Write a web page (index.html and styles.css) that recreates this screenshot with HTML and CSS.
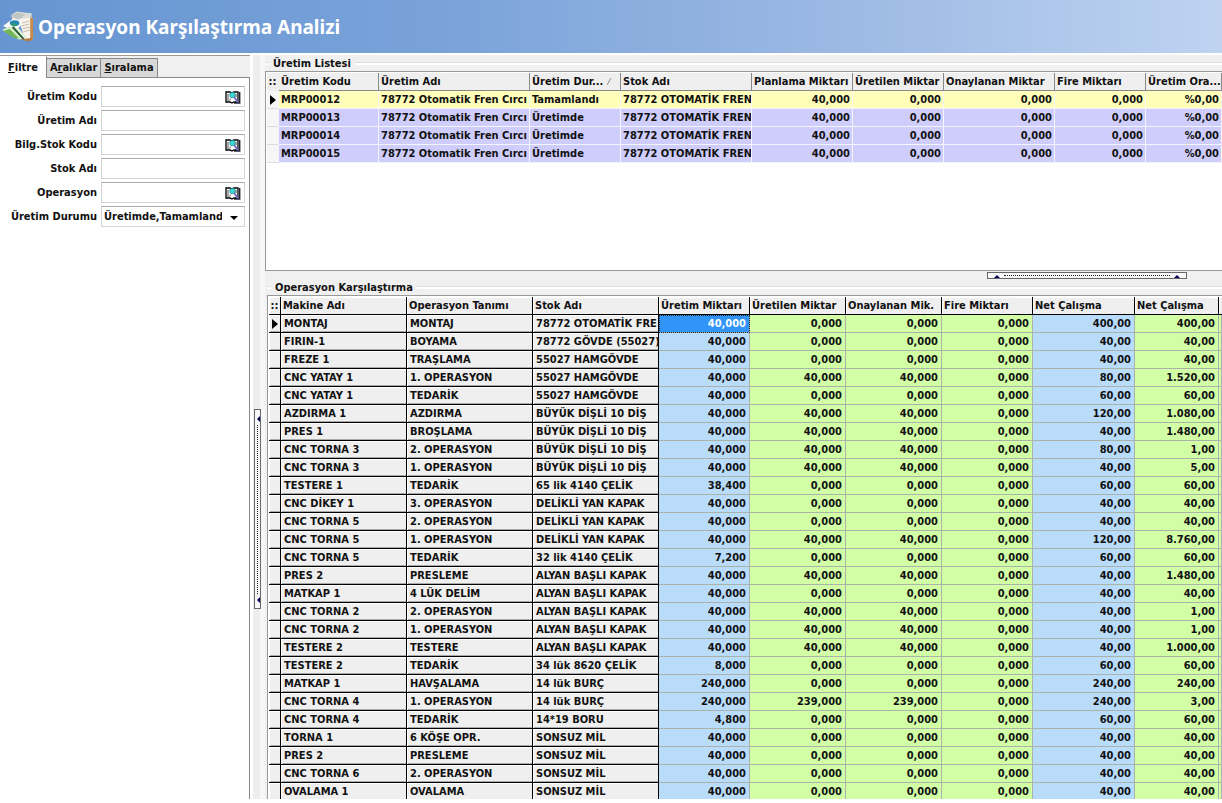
FILE: index.html
```html
<!DOCTYPE html>
<html lang="tr">
<head>
<meta charset="utf-8">
<title>Operasyon Karşılaştırma Analizi</title>
<link rel="stylesheet" href="styles.css">
</head>
<body>
<svg class="defs" aria-hidden="true">
  <symbol id="book" viewBox="0 0 16 14">
    <path d="M1 2h4l2 1 2-1h4v10H9l-2 1-2-1H1z" fill="#fff" stroke="#000" stroke-width="1.300"/>
    <path d="M3 4v7M11 4v3" stroke="#555" stroke-width="1"/>
    <path d="M14.700 2v11H9" fill="none" stroke="#223" stroke-width="1.400"/>
    <path d="M9 7l4 5" stroke="#7566c0" stroke-width="2"/>
    <circle cx="7.500" cy="5" r="2.800" fill="#3fd6d6" stroke="#177" stroke-width=".6"/>
    <path d="M6 8l-2 3" stroke="#888" stroke-width="1"/>
  </symbol>
</svg>
<header class="title-bar">
  <svg class="logo" viewBox="0 0 34 32" aria-hidden="true">
    <path d="M10 3l5-3 16 2-2 7-18 4z" fill="#dcdcd8"/>
    <path d="M8 5l7-4 9 2-6 5z" fill="#bfc6c4"/>
    <path d="M17 8l14-2 1 22-8 2z" fill="#f6f3ec"/>
    <path d="M29 6l3 1v21l-3 3z" fill="#c98b4c"/>
    <path d="M20 12l8-2M20 15l8-2M21 18l8-2M22 21l7-2" stroke="#c7b9a6" stroke-width="1"/>
    <path d="M1 15L12 7l9 4-6 10z" fill="#fbfbf7"/>
    <ellipse cx="13" cy="12" rx="5" ry="3" fill="#2586b3"/>
    <path d="M9 13c2-2 5-1 7 1-2 2-5 2-7-1z" fill="#2c9a72"/>
    <path d="M0 19l8-4 10 3 8 10-9 1z" fill="#d9ecc9"/>
    <path d="M1 20l7-2 10 10-6-1z" fill="#72b653"/>
    <path d="M11 16l12 13" stroke="#295d35" stroke-width="2"/>
    <path d="M14 16l10 12" stroke="#eef6ea" stroke-width="1.200"/>
    <path d="M19 29l13-2-5 4z" fill="#b87843"/>
  </svg>
  <h1>Operasyon Karşılaştırma Analizi</h1>
</header>
<main class="workspace">
  <aside class="sidebar">
    <div class="tabs" role="tablist">
      <button class="tab active" role="tab" aria-selected="true"><u>F</u>iltre</button>
      <button class="tab" role="tab"><span>A<u>r</u>alıklar</span></button>
      <button class="tab" role="tab"><u>S</u>ıralama</button>
    </div>
    <form class="filter">
      <label for="kod">Üretim Kodu</label>
      <div class="field"><input id="kod" type="text"><button type="button" aria-label="Üretim Kodu ara"><svg><use href="#book"/></svg></button></div>
      <label for="ad">Üretim Adı</label>
      <div class="field"><input id="ad" type="text"></div>
      <label for="bstok">Bilg.Stok Kodu</label>
      <div class="field"><input id="bstok" type="text"><button type="button" aria-label="Stok Kodu ara"><svg><use href="#book"/></svg></button></div>
      <label for="stok">Stok Adı</label>
      <div class="field"><input id="stok" type="text"></div>
      <label for="opr">Operasyon</label>
      <div class="field"><input id="opr" type="text"><button type="button" aria-label="Operasyon ara"><svg><use href="#book"/></svg></button></div>
      <label for="durum">Üretim Durumu</label>
      <div class="field"><select id="durum"><option>Üretimde,Tamamlandı</option></select><svg class="drop" viewBox="0 0 8 4" aria-hidden="true"><path d="M0 0h8L4 4z"/></svg></div>
    </form>
  </aside>
  <div class="splitter-v">
    <button class="grip-v" aria-label="Filtre panelini gizle"><svg viewBox="0 0 3 6"><path d="M3 0v6L0 3z"/></svg><i></i><svg viewBox="0 0 3 6"><path d="M3 0v6L0 3z"/></svg></button>
  </div>
  <div class="content">
    <section class="group list">
      <h2>Üretim Listesi</h2>
      <div class="frame">
        <table class="grid plain">
          <colgroup><col class="w12"><col class="w100"><col class="w151"><col class="w91"><col class="w131"><col class="w101"><col class="w91"><col class="w111"><col class="w91"><col></colgroup>
          <thead><tr><th class="mark">::</th><th>Üretim Kodu</th><th>Üretim Adı</th><th>Üretim Dur... <svg class="sort" viewBox="0 0 5 7" aria-hidden="true"><path d="M0 7L4 0"/></svg></th><th>Stok Adı</th><th>Planlama Miktarı</th><th>Üretilen Miktar</th><th>Onaylanan Miktar</th><th>Fire Miktarı</th><th>Üretim Ora...</th></tr></thead>
          <tbody>
            <tr class="current"><td class="mark"><svg viewBox="0 0 6 10"><path d="M0 0l6 5-6 5z"/></svg></td><td>MRP00012</td><td>78772 Otomatik Fren Cırcı</td><td>Tamamlandı</td><td>78772 OTOMATİK FREN</td><td>40,000</td><td>0,000</td><td>0,000</td><td>0,000</td><td>%0,00</td></tr>
            <tr><td class="mark"></td><td>MRP00013</td><td>78772 Otomatik Fren Cırcı</td><td>Üretimde</td><td>78772 OTOMATİK FREN</td><td>40,000</td><td>0,000</td><td>0,000</td><td>0,000</td><td>%0,00</td></tr>
            <tr><td class="mark"></td><td>MRP00014</td><td>78772 Otomatik Fren Cırcı</td><td>Üretimde</td><td>78772 OTOMATİK FREN</td><td>40,000</td><td>0,000</td><td>0,000</td><td>0,000</td><td>%0,00</td></tr>
            <tr><td class="mark"></td><td>MRP00015</td><td>78772 Otomatik Fren Cırcı</td><td>Üretimde</td><td>78772 OTOMATİK FREN</td><td>40,000</td><td>0,000</td><td>0,000</td><td>0,000</td><td>%0,00</td></tr>
          </tbody>
        </table>
      </div>
    </section>
    <div class="splitter-h">
      <button class="grip-h" aria-label="Üretim listesini gizle"><svg viewBox="0 0 6 3"><path d="M0 3h6L3 0z"/></svg><i></i><svg viewBox="0 0 6 3"><path d="M0 3h6L3 0z"/></svg></button>
    </div>
    <section class="group compare">
      <h2>Operasyon Karşılaştırma</h2>
      <div class="frame">
        <table class="grid fixed">
          <colgroup><col class="w12"><col class="w126"><col class="w126"><col class="w126"><col class="w91"><col class="w96"><col class="w96"><col class="w91"><col class="w102"><col class="w84"><col></colgroup>
          <thead><tr><th class="mark">::</th><th>Makine Adı</th><th>Operasyon Tanımı</th><th>Stok Adı</th><th>Üretim Miktarı</th><th>Üretilen Miktar</th><th>Onaylanan Mik.</th><th>Fire Miktarı</th><th>Net Çalışma</th><th>Net Çalışma</th><th></th></tr></thead>
          <tbody>
            <tr><td class="mark"><svg viewBox="0 0 6 10"><path d="M0 0l6 5-6 5z"/></svg></td><td>MONTAJ</td><td>MONTAJ</td><td>78772 OTOMATİK FRE</td><td class="selected">40,000</td><td>0,000</td><td>0,000</td><td>0,000</td><td>400,00</td><td>400,00</td><td></td></tr>
            <tr><td></td><td>FIRIN-1</td><td>BOYAMA</td><td>78772 GÖVDE (55027)</td><td>40,000</td><td>0,000</td><td>0,000</td><td>0,000</td><td>40,00</td><td>40,00</td><td></td></tr>
            <tr><td></td><td>FREZE 1</td><td>TRAŞLAMA</td><td>55027 HAMGÖVDE</td><td>40,000</td><td>0,000</td><td>0,000</td><td>0,000</td><td>40,00</td><td>40,00</td><td></td></tr>
            <tr><td></td><td>CNC YATAY 1</td><td>1. OPERASYON</td><td>55027 HAMGÖVDE</td><td>40,000</td><td>40,000</td><td>40,000</td><td>0,000</td><td>80,00</td><td>1.520,00</td><td></td></tr>
            <tr><td></td><td>CNC YATAY 1</td><td>TEDARİK</td><td>55027 HAMGÖVDE</td><td>40,000</td><td>0,000</td><td>0,000</td><td>0,000</td><td>60,00</td><td>60,00</td><td></td></tr>
            <tr><td></td><td>AZDIRMA 1</td><td>AZDIRMA</td><td>BÜYÜK DİŞLİ 10 DİŞ</td><td>40,000</td><td>40,000</td><td>40,000</td><td>0,000</td><td>120,00</td><td>1.080,00</td><td></td></tr>
            <tr><td></td><td>PRES 1</td><td>BROŞLAMA</td><td>BÜYÜK DİŞLİ 10 DİŞ</td><td>40,000</td><td>40,000</td><td>40,000</td><td>0,000</td><td>40,00</td><td>1.480,00</td><td></td></tr>
            <tr><td></td><td>CNC TORNA 3</td><td>2. OPERASYON</td><td>BÜYÜK DİŞLİ 10 DİŞ</td><td>40,000</td><td>40,000</td><td>40,000</td><td>0,000</td><td>80,00</td><td>1,00</td><td></td></tr>
            <tr><td></td><td>CNC TORNA 3</td><td>1. OPERASYON</td><td>BÜYÜK DİŞLİ 10 DİŞ</td><td>40,000</td><td>40,000</td><td>40,000</td><td>0,000</td><td>40,00</td><td>5,00</td><td></td></tr>
            <tr><td></td><td>TESTERE 1</td><td>TEDARİK</td><td>65 lik 4140 ÇELİK</td><td>38,400</td><td>0,000</td><td>0,000</td><td>0,000</td><td>60,00</td><td>60,00</td><td></td></tr>
            <tr><td></td><td>CNC DİKEY 1</td><td>3. OPERASYON</td><td>DELİKLİ YAN KAPAK</td><td>40,000</td><td>0,000</td><td>0,000</td><td>0,000</td><td>40,00</td><td>40,00</td><td></td></tr>
            <tr><td></td><td>CNC TORNA 5</td><td>2. OPERASYON</td><td>DELİKLİ YAN KAPAK</td><td>40,000</td><td>0,000</td><td>0,000</td><td>0,000</td><td>40,00</td><td>40,00</td><td></td></tr>
            <tr><td></td><td>CNC TORNA 5</td><td>1. OPERASYON</td><td>DELİKLİ YAN KAPAK</td><td>40,000</td><td>40,000</td><td>40,000</td><td>0,000</td><td>120,00</td><td>8.760,00</td><td></td></tr>
            <tr><td></td><td>CNC TORNA 5</td><td>TEDARİK</td><td>32 lik 4140 ÇELİK</td><td>7,200</td><td>0,000</td><td>0,000</td><td>0,000</td><td>60,00</td><td>60,00</td><td></td></tr>
            <tr><td></td><td>PRES 2</td><td>PRESLEME</td><td>ALYAN BAŞLI KAPAK</td><td>40,000</td><td>40,000</td><td>40,000</td><td>0,000</td><td>40,00</td><td>1.480,00</td><td></td></tr>
            <tr><td></td><td>MATKAP 1</td><td>4 LÜK DELİM</td><td>ALYAN BAŞLI KAPAK</td><td>40,000</td><td>0,000</td><td>0,000</td><td>0,000</td><td>40,00</td><td>40,00</td><td></td></tr>
            <tr><td></td><td>CNC TORNA 2</td><td>2. OPERASYON</td><td>ALYAN BAŞLI KAPAK</td><td>40,000</td><td>40,000</td><td>40,000</td><td>0,000</td><td>40,00</td><td>1,00</td><td></td></tr>
            <tr><td></td><td>CNC TORNA 2</td><td>1. OPERASYON</td><td>ALYAN BAŞLI KAPAK</td><td>40,000</td><td>40,000</td><td>40,000</td><td>0,000</td><td>40,00</td><td>1,00</td><td></td></tr>
            <tr><td></td><td>TESTERE 2</td><td>TESTERE</td><td>ALYAN BAŞLI KAPAK</td><td>40,000</td><td>40,000</td><td>40,000</td><td>0,000</td><td>40,00</td><td>1.000,00</td><td></td></tr>
            <tr><td></td><td>TESTERE 2</td><td>TEDARİK</td><td>34 lük 8620 ÇELİK</td><td>8,000</td><td>0,000</td><td>0,000</td><td>0,000</td><td>60,00</td><td>60,00</td><td></td></tr>
            <tr><td></td><td>MATKAP 1</td><td>HAVŞALAMA</td><td>14 lük BURÇ</td><td>240,000</td><td>0,000</td><td>0,000</td><td>0,000</td><td>240,00</td><td>240,00</td><td></td></tr>
            <tr><td></td><td>CNC TORNA 4</td><td>1. OPERASYON</td><td>14 lük BURÇ</td><td>240,000</td><td>239,000</td><td>239,000</td><td>0,000</td><td>240,00</td><td>3,00</td><td></td></tr>
            <tr><td></td><td>CNC TORNA 4</td><td>TEDARİK</td><td>14*19 BORU</td><td>4,800</td><td>0,000</td><td>0,000</td><td>0,000</td><td>60,00</td><td>60,00</td><td></td></tr>
            <tr><td></td><td>TORNA 1</td><td>6 KÖŞE OPR.</td><td>SONSUZ MİL</td><td>40,000</td><td>0,000</td><td>0,000</td><td>0,000</td><td>40,00</td><td>40,00</td><td></td></tr>
            <tr><td></td><td>PRES 2</td><td>PRESLEME</td><td>SONSUZ MİL</td><td>40,000</td><td>0,000</td><td>0,000</td><td>0,000</td><td>40,00</td><td>40,00</td><td></td></tr>
            <tr><td></td><td>CNC TORNA 6</td><td>2. OPERASYON</td><td>SONSUZ MİL</td><td>40,000</td><td>0,000</td><td>0,000</td><td>0,000</td><td>40,00</td><td>40,00</td><td></td></tr>
            <tr><td></td><td>OVALAMA 1</td><td>OVALAMA</td><td>SONSUZ MİL</td><td>40,000</td><td>0,000</td><td>0,000</td><td>0,000</td><td>40,00</td><td>40,00</td><td></td></tr>
          </tbody>
        </table>
      </div>
    </section>
  </div>
</main>
</body>
</html>
```
FILE: styles.css
```css
* { box-sizing: border-box; }
body {
  margin: 0;
  height: 100vh;
  display: flex;
  flex-direction: column;
  padding-bottom: 4px;
  background: #fff;
  color: #111;
  font: bold 11px/17px "DejaVu Sans Condensed", Tahoma, "DejaVu Sans", sans-serif;
  overflow: hidden;
}
.defs { position: absolute; width: 0; height: 0; }
button, input, select { font: inherit; color: inherit; margin: 0; border-radius: 0; }

.title-bar {
  flex: none;
  display: flex;
  align-items: center;
  gap: 3px;
  height: 53px;
  padding-left: 2px;
  background: linear-gradient(90deg, #6695d1, #79a2d9 35%, #9dbae4 70%, #bfd3f1);
}
.logo { width: 33px; height: 32px; }
h1 { margin: 0; color: #fff; font: bold 19px/24px "Noto Sans", Tahoma, sans-serif; }

.workspace { flex: 1; min-height: 0; display: flex; padding-top: 2px; }

.sidebar { flex: none; width: 250px; display: flex; flex-direction: column; border-top: 1px solid #999; background: #f0f0f0; }
.tabs { display: flex; align-items: flex-end; height: 21px; position: relative; }
.tab {
  height: 19px;
  padding: 0 3px;
  border: 1px solid #888;
  border-left-width: 0;
  border-bottom: 0;
  background: #d8d8d8;
  line-height: 18px;
}
.tab.active { height: 22px; margin-bottom: -1px; padding: 0 8px; background: #fff; border-top-color: #fff; line-height: 19px; }
.filter {
  flex: 1;
  display: grid;
  grid-template-columns: 97px 1fr;
  grid-auto-rows: 21px;
  align-content: start;
  gap: 3px 4px;
  padding: 8px 4px 0 0;
  background: #fff;
  border-top: 1px solid #888;
  border-right: 1px solid #888;
}
.filter label { text-align: right; line-height: 21px; white-space: nowrap; }
.field { display: flex; align-items: center; border: 1px solid #d4d4d4; border-top-color: #aaa; padding-right: 3px; min-width: 0; }
.field input, .field select { flex: 1; min-width: 0; height: 19px; border: 0; padding: 0 2px; background: none; outline: 0; appearance: none; }
.field button { width: 16px; height: 14px; padding: 0; border: 0; background: none; display: flex; }
.field button svg { width: 16px; height: 14px; }
.field select { overflow: hidden; white-space: nowrap; }
.drop { width: 8px; height: 4px; margin: 2px 3px 0 6px; }

.splitter-v { flex: none; width: 15px; padding: 354px 0 0 4px; background: linear-gradient(90deg, #fff 3px, #eee 3px, #eee 10px, #f7f7f7 10px); }
.grip-v, .grip-h { display: flex; align-items: center; padding: 0; border: 1px solid #666; background: #f8f8f8; }
.grip-v { flex-direction: column; align-items: flex-end; width: 7px; height: 200px; padding: 6px 0 5px; gap: 3px; }
.grip-v svg { width: 3px; height: 6px; fill: #005; }
.grip-v i { flex: 1; border-left: 1px dotted #222; margin-right: 2px; }
.splitter-h { flex: none; display: flex; justify-content: flex-end; height: 8px; padding: 1px 35px 0 0; }
.grip-h { width: 200px; height: 7px; padding: 0 6px; gap: 4px; }
.grip-h svg { width: 6px; height: 3px; margin-top: 2px; fill: #005; }
.grip-h i { flex: 1; border-top: 1px dotted #222; }

.content { flex: 1; min-width: 0; display: flex; flex-direction: column; background: #f0f0f0; }
.group { display: flex; flex-direction: column; min-width: 0; }
.list { flex: none; height: 216px; }
.compare { flex: 1; min-height: 0; padding-left: 2px; }
.group h2 { flex: none; display: flex; align-items: center; gap: 4px; height: 16px; margin: 0; font: inherit; }
.group h2::before, .group h2::after { content: ""; width: 4px; height: 2px; border-top: 1px solid #ddd; background: #fff; }
.group h2::after { flex: 1; }
.frame { flex: 1; min-height: 0; padding: 1px 0 0 1px; border: 1px solid #999; border-right: 0; background: #fff; overflow: hidden; }
.compare .frame { border-bottom: 0; }

.grid { width: 100%; table-layout: fixed; border-spacing: 0; }
.grid th, .grid td { height: 18px; padding: 0 2px; overflow: hidden; white-space: nowrap; text-align: left; line-height: 17px; font-weight: bold; }
.grid td:nth-child(n+6) { text-align: right; }
.grid .mark { padding: 0; text-align: center; }
.grid td.mark svg { display: block; width: 6px; height: 10px; margin: 0 auto; }
.grid th { background: #efefef; }
.w12 { width: 12px; } .w84 { width: 84px; } .w91 { width: 91px; } .w96 { width: 96px; }
.w100 { width: 100px; } .w101 { width: 101px; } .w102 { width: 102px; } .w111 { width: 111px; }
.w126 { width: 126px; } .w131 { width: 131px; } .w151 { width: 151px; }

.plain th { border-right: 1px solid #888; border-bottom: 1px solid #888; }
.plain th.mark { border-color: #efefef; }
.plain td { background: #cfcdfb; border-right: 1px solid #f4f4fb; border-bottom: 1px solid #f4f4fb; }
.plain .current td { background: #ffffb9; }
.plain td.mark, .plain .current td.mark { background: #f6f6f6; border-bottom-color: #ddd; }
.sort { width: 5px; height: 7px; fill: none; stroke: #888; }

.fixed th { border-right: 1px solid #000; border-bottom: 1px solid #000; box-shadow: inset 1px 1px #fff; }
.fixed th:last-child { border-right: 0; padding: 0; }
.fixed td { padding-top: 1px; line-height: 16px; background: #d2ffa6; border-right: 1px solid #a9b3a9; border-bottom: 1px solid #a9b3a9; }
.fixed td:nth-child(-n+4) { background: #efefef; border-right: 1px solid #000; border-bottom: 1px solid #000; box-shadow: inset 1px 1px #fff, inset 0 -1px #aaa; padding: 1px 0 0 3px; }
.fixed td.mark { padding-left: 0; }
.fixed td:nth-child(5), .fixed td:nth-child(9) { background: #b9dcfb; text-align: right; }
.fixed td:nth-child(n+5) { padding-right: 3px; }
.fixed td.selected { background: #3194f8; color: #fff; outline: 1px dotted #222; outline-offset: -1px; }
```
